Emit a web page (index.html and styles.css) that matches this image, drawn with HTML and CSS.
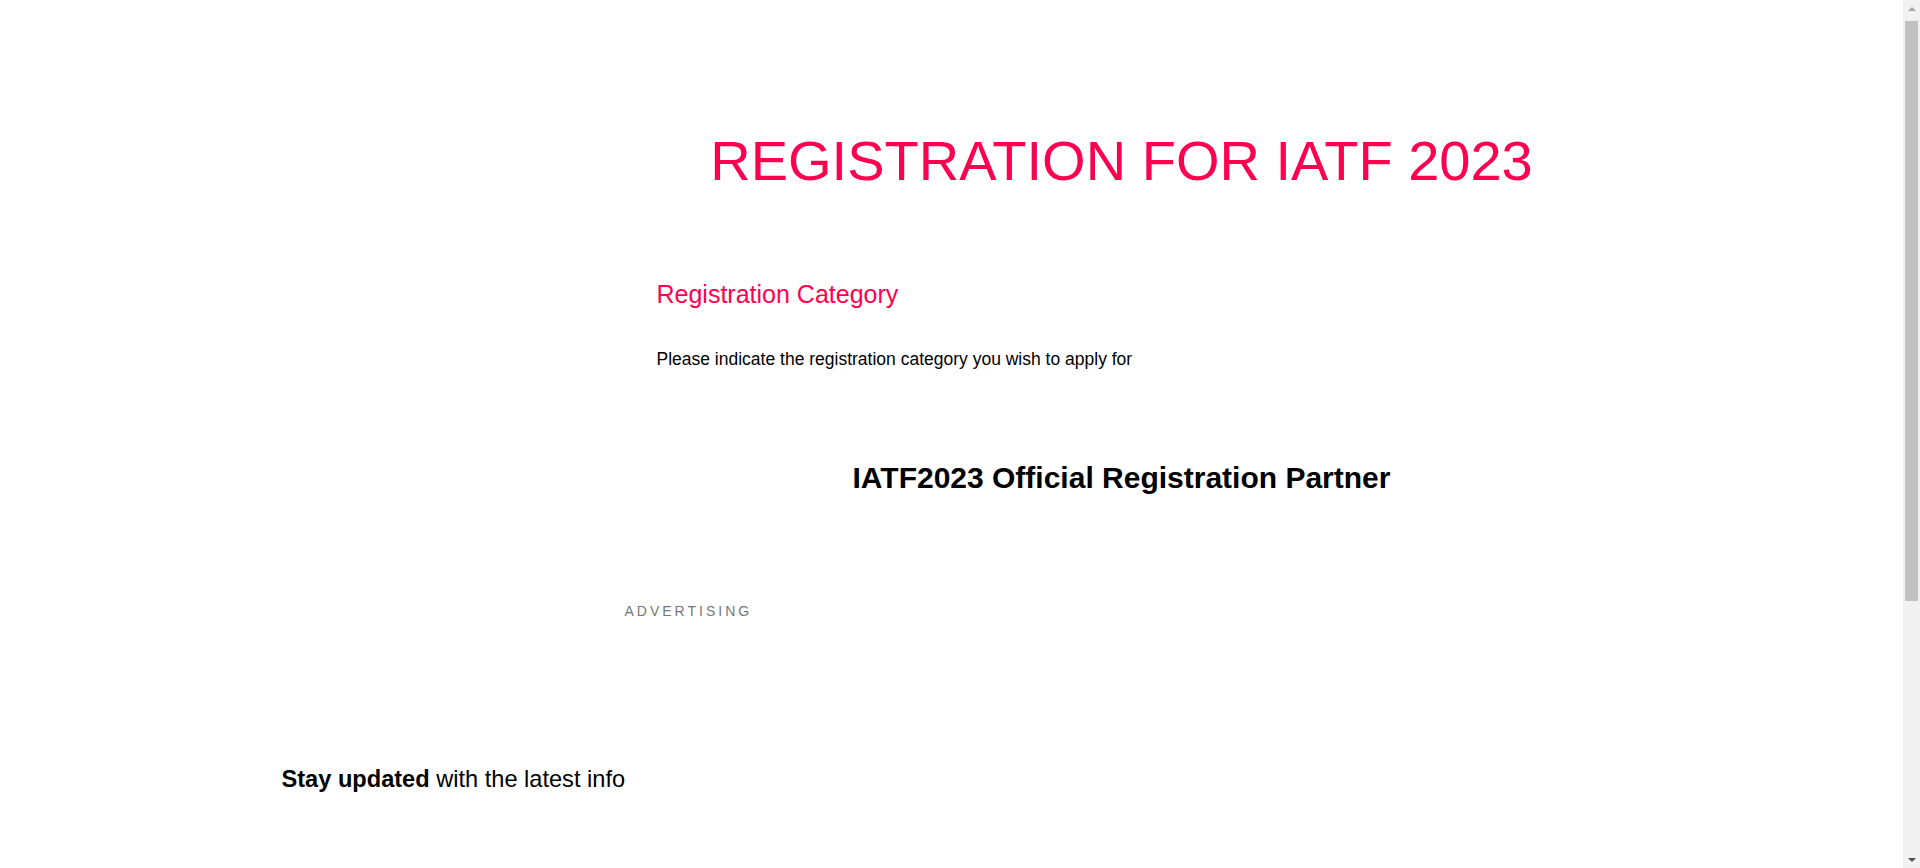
FILE: index.html
```html
<!DOCTYPE html>
<html lang="en">
<head>
<meta charset="utf-8">
<title>Registration for IATF 2023</title>
<link rel="stylesheet" href="styles.css">
</head>
<body>
<div class="page">
  <div class="layout">
    <aside class="sidebar"></aside>
    <main class="main">
      <h1 class="title">REGISTRATION FOR IATF 2023</h1>
      <section class="form">
        <h2 class="form-heading">Registration Category</h2>
        <p class="form-note">Please indicate the registration category you wish to apply for</p>
      </section>
      <h3 class="partner">IATF2023 Official Registration Partner</h3>
      <div class="ad-label">ADVERTISING</div>
    </main>
  </div>
  <footer class="footer">
    <p class="newsletter"><strong>Stay updated</strong> with the latest info</p>
  </footer>
</div>
<div class="scrollbar" aria-hidden="true">
  <span class="arrow arrow-up"></span>
  <span class="thumb"></span>
  <span class="arrow arrow-down"></span>
</div>
</body>
</html>
```

FILE: styles.css
```css
html, body {
  margin: 0;
  padding: 0;
  background: #ffffff;
}

body {
  font-family: "Liberation Sans", Arial, sans-serif;
  color: #000000;
  padding-right: 17px;
}

.page {
  width: 1340px;
  margin: 0 auto;
  padding-bottom: 452px;
}

.layout {
  display: grid;
  grid-template-columns: 343px 994px;
}

.main {
  padding-top: 127px;
  display: flex;
  flex-direction: column;
}

.title {
  margin: 0;
  font-size: 56px;
  line-height: 1.2;
  font-weight: normal;
  color: #ff0050;
  text-align: center;
}

.form {
  padding-left: 32px;
  margin-top: 85px;
}

.form-heading {
  margin: 0;
  font-size: 25px;
  line-height: 30px;
  font-weight: normal;
  color: #ff0050;
}

.form-note {
  margin: 40px 0 0;
  font-size: 17.5px;
  line-height: 20.4px;
}

.partner {
  margin: 90px 0 0;
  font-size: 30px;
  line-height: 36px;
  font-weight: bold;
  text-align: center;
}

.ad-label {
  margin-top: 108px;
  font-size: 14px;
  line-height: 15.6px;
  letter-spacing: 3px;
  color: #777777;
}

.footer {
  margin-top: 146px;
}

.newsletter {
  margin: 0;
  font-size: 23.6px;
  line-height: 28.8px;
}

.newsletter strong {
  font-weight: bold;
}

/* browser scrollbar overlay */
.scrollbar {
  position: fixed;
  top: 0;
  right: 0;
  width: 17px;
  height: 100vh;
  background: #f1f1f1;
  display: flex;
  flex-direction: column;
  align-items: center;
}

.arrow {
  flex: 0 0 17px;
  width: 17px;
  display: flex;
  align-items: center;
  justify-content: center;
}

.arrow::before {
  content: "";
  width: 0;
  height: 0;
  border-left: 4px solid transparent;
  border-right: 4px solid transparent;
}

.arrow-up::before {
  border-bottom: 4px solid #a3a3a3;
}

.arrow-down {
  margin-top: auto;
}

.arrow-down::before {
  border-top: 4px solid #505050;
}

.thumb {
  width: 13px;
  height: 580px;
  margin-top: 4px;
  background: #c1c1c1;
}
```
